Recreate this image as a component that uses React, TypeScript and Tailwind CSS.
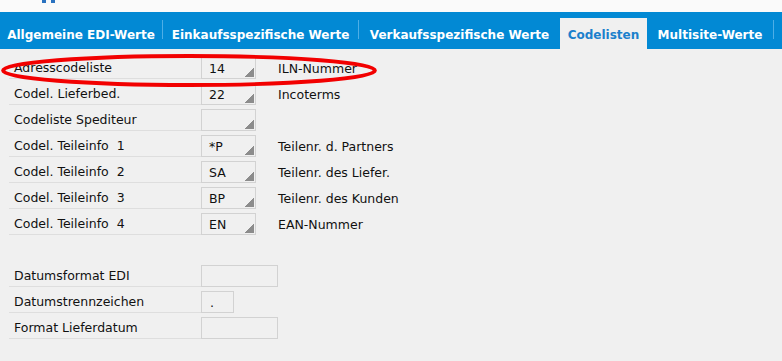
import React from 'react'

const tabs = [
  { label: 'Allgemeine EDI-Werte', w: 'w-[162px]', sep: true },
  { label: 'Einkaufsspezifische Werte', w: 'w-[195px]', sep: true },
  { label: 'Verkaufsspezifische Werte', w: 'w-[201px]', sep: false },
  { label: 'Codelisten', w: 'w-[87px]', active: true, sep: false },
  { label: 'Multisite-Werte', w: 'w-[126px]', sep: true },
]

const codeRows = [
  { label: 'Adresscodeliste', value: '14', desc: 'ILN-Nummer' },
  { label: 'Codel. Lieferbed.', value: '22', desc: 'Incoterms' },
  { label: 'Codeliste Spediteur', value: '', desc: '' },
  { label: 'Codel. Teileinfo  1', value: '*P', desc: 'Teilenr. d. Partners' },
  { label: 'Codel. Teileinfo  2', value: 'SA', desc: 'Teilenr. des Liefer.' },
  { label: 'Codel. Teileinfo  3', value: 'BP', desc: 'Teilenr. des Kunden' },
  { label: 'Codel. Teileinfo  4', value: 'EN', desc: 'EAN-Nummer' },
]

const dateRows = [
  { label: 'Datumsformat EDI', value: '', w: 'w-[77px]' },
  { label: 'Datumstrennzeichen', value: '.', w: 'w-[33px]' },
  { label: 'Format Lieferdatum', value: '', w: 'w-[77px]' },
]

function Corner() {
  return (
    <svg className="absolute right-[1px] bottom-[1px]" width="9" height="9" viewBox="0 0 9 9">
      <path d="M9 0 V9 H0 V8 H1 V7 H2 V6 H3 V5 H4 V4 H5 V3 H6 V2 H7 V1 H8 V0 Z" fill="#8c8c8c" />
    </svg>
  )
}

function Label({ text }: { text: string }) {
  return (
    <div className="ml-[9px] w-[192px] h-full flex items-center pl-[5px] pt-[2px] border-b border-[#dedede] whitespace-pre">
      {text}
    </div>
  )
}

export default function App() {
  return (
    <div
      className="w-[782px] h-[361px] bg-[#f0f0f0] text-[12.5px] text-[#111] overflow-hidden relative"
      style={{ fontFamily: '"DejaVu Sans", Verdana, sans-serif' }}
    >
      <div className="h-[12px] bg-[#fafafa] relative">
        <span className="absolute left-[42px] top-0 w-[4px] h-[3px] bg-[#2a72c0]" />
        <span className="absolute left-[51px] top-0 w-[4px] h-[3px] bg-[#2a72c0]" />
      </div>

      <div className="h-[37px] bg-[#0289d4] flex items-end">
        {tabs.map((t) => (
          <div key={t.label} className="flex items-end">
            <div
              className={`${t.w} h-[31px] flex items-center justify-center font-bold text-[12px] pt-[2px] ${
                t.active ? 'bg-[#f0f0f0] text-[#1b80cc]' : 'text-white'
              }`}
            >
              {t.label}
            </div>
            {t.sep && <div className="w-px h-[19px] mb-[10px] bg-[#4eaee6]" />}
          </div>
        ))}
      </div>

      <div className="pt-[4px]">
        {codeRows.map((r) => (
          <div key={r.label} className="mt-[4px] h-[22px] flex items-stretch">
            <Label text={r.label} />
            <div className="relative w-[55px] h-[22px] border border-[#d2d2d2] flex items-center pl-[7px] pt-[2px]">
              {r.value}
              <Corner />
            </div>
            <div className="ml-[22px] flex items-center pt-[2px]">{r.desc}</div>
          </div>
        ))}

        <div className="h-[26px]" />

        {dateRows.map((r) => (
          <div key={r.label} className="mt-[4px] h-[22px] flex items-stretch">
            <Label text={r.label} />
            <div className={`${r.w} h-[22px] border border-[#d2d2d2] flex items-center pl-[8px] pt-[2px]`}>
              {r.value}
            </div>
          </div>
        ))}
      </div>

      <svg className="absolute left-0 top-[50px] pointer-events-none" width="382" height="42" viewBox="0 0 382 42">
        <ellipse cx="189" cy="20.5" rx="186" ry="14.5" fill="none" stroke="#f20000" strokeWidth="3.8" />
      </svg>
    </div>
  )
}
